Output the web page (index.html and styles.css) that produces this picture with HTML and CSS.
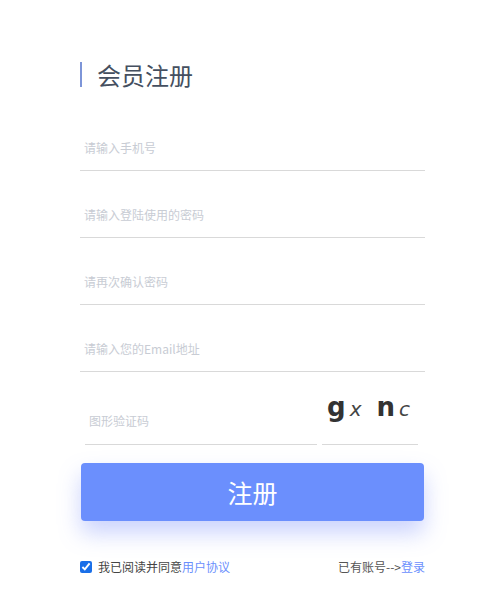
FILE: index.html
```html
<!DOCTYPE html>
<html lang="zh-CN">
<head>
<meta charset="utf-8">
<title>会员注册</title>
<link rel="stylesheet" href="styles.css">
</head>
<body>
<div class="page">
  <h1 class="title">会员注册</h1>
  <form class="form">
    <div class="field"><input type="text" placeholder="请输入手机号"></div>
    <div class="field"><input type="password" placeholder="请输入登陆使用的密码"></div>
    <div class="field"><input type="password" placeholder="请再次确认密码"></div>
    <div class="field"><input type="text" placeholder="请输入您的Email地址"></div>
    <div class="captcha-row">
      <div class="captcha-field"><input type="text" placeholder="图形验证码"></div>
      <div class="captcha-box">
        <span class="cb">g</span><span class="ci">x</span><span class="cb gap">n</span><span class="ci">c</span>
      </div>
    </div>
    <button type="button" class="submit">注册</button>
    <div class="footer">
      <label class="agree"><input type="checkbox" checked><span>我已阅读并同意<a href="#" class="link">用户协议</a></span></label>
      <span class="login">已有账号--&gt;<a href="#" class="link">登录</a></span>
    </div>
  </form>
</div>
</body>
</html>
```
FILE: styles.css
```css
* { box-sizing: border-box; }
html, body { margin: 0; padding: 0; background: #fff; }
body {
  font-family: "Noto Sans CJK SC", "Noto Sans", sans-serif;
  color: #333;
}
.page {
  width: 345px;
  margin-left: 80px;
  padding-top: 62px;
}
.title {
  margin: 0;
  height: 25px;
  border-left: 2px solid #7d95d8;
  padding-left: 15px;
  font-size: 24px;
  font-weight: 400;
  line-height: 25px;
  color: #454f60;
}
.form {
  display: flex;
  flex-direction: column;
  margin-top: 17px;
}
.field {
  height: 67px;
  padding-top: 20px;
  border-bottom: 1px solid #d9d9d9;
}
input[type=text], input[type=password] {
  display: block;
  width: 100%;
  height: 46px;
  border: 0;
  outline: none;
  padding: 0 4px;
  font-family: "Noto Sans CJK SC", "Noto Sans", sans-serif;
  font-size: 12px;
  color: #333;
  background: transparent;
}
input::placeholder { color: #c8ccd4; }
.captcha-row {
  display: flex;
  align-items: flex-end;
  height: 73px;
}
.captcha-field {
  margin-left: 5px;
  width: 232px;
  border-bottom: 1px solid #d9d9d9;
}
.captcha-field input { height: 48px; }
.captcha-box {
  margin-left: 5px;
  width: 96px;
  height: 72px;
  border-bottom: 1px solid #d9d9d9;
  display: flex;
  align-items: baseline;
  padding-top: 19px;
  padding-left: 5px;
  color: #333;
  font-family: "DejaVu Sans", sans-serif;
}
.cb { font-size: 26px; font-weight: 700; line-height: 30px; }
.ci { font-size: 20px; font-style: italic; font-weight: 400; margin-left: 4px; color: #444; }
.gap { margin-left: 15px; }
.submit {
  margin-top: 18px;
  margin-left: 1px;
  width: 343px;
  height: 58px;
  border: 0;
  border-radius: 4px;
  background: #6b8ffd;
  color: #fff;
  font-family: "Noto Sans CJK SC", "Noto Sans", sans-serif;
  font-size: 25px;
  box-shadow: 0 12px 22px rgba(107, 130, 250, 0.35);
  cursor: pointer;
}
.footer {
  margin-top: 38px;
  display: flex;
  justify-content: space-between;
  align-items: center;
  font-size: 12px;
  line-height: 16px;
}
.agree { display: flex; align-items: center; color: #444; }
.agree input {
  margin: 0 6px 0 0;
  width: 12px;
  height: 12px;
  accent-color: #1a6fe8;
}
.login { color: #555; }
.link { color: #6b8ffd; text-decoration: none; }
```
